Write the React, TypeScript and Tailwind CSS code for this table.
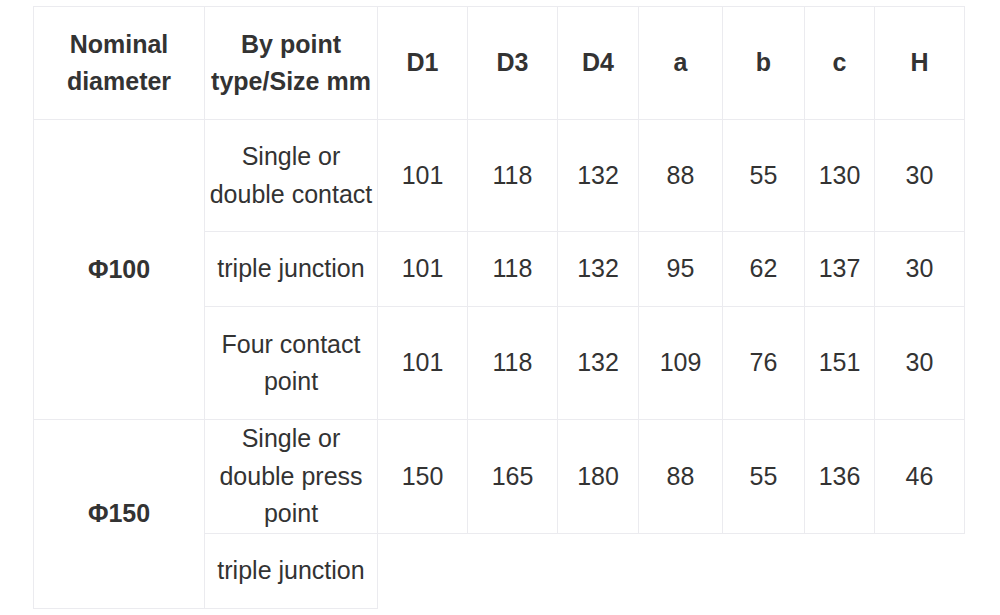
import clsx from 'clsx';

type Cell = { text: string; bold?: boolean; rowSpan?: number };

const widths = [171, 173, 90, 90, 81, 84, 82, 70, 90];

const header = ['Nominal diameter', 'By point type/Size mm', 'D1', 'D3', 'D4', 'a', 'b', 'c', 'H'];

const rows: { h: number; cells: Cell[] }[] = [
  {
    h: 112,
    cells: [
      { text: 'Φ100', bold: true, rowSpan: 3 },
      { text: 'Single or double contact' },
      { text: '101' }, { text: '118' }, { text: '132' }, { text: '88' }, { text: '55' }, { text: '130' }, { text: '30' },
    ],
  },
  {
    h: 75,
    cells: [
      { text: 'triple junction' },
      { text: '101' }, { text: '118' }, { text: '132' }, { text: '95' }, { text: '62' }, { text: '137' }, { text: '30' },
    ],
  },
  {
    h: 113,
    cells: [
      { text: 'Four contact point' },
      { text: '101' }, { text: '118' }, { text: '132' }, { text: '109' }, { text: '76' }, { text: '151' }, { text: '30' },
    ],
  },
  {
    h: 112,
    cells: [
      { text: 'Φ150', bold: true, rowSpan: 2 },
      { text: 'Single or double press point' },
      { text: '150' }, { text: '165' }, { text: '180' }, { text: '88' }, { text: '55' }, { text: '136' }, { text: '46' },
    ],
  },
  {
    h: 75,
    cells: [{ text: 'triple junction' }],
  },
];

export default function App() {
  return (
    <div className="min-h-[615px] bg-white pl-[33px] pt-[6px] font-['Liberation_Sans',Arial,sans-serif] text-[25px] leading-[37.5px] text-[#333333]">
      <table className="w-[931px] table-fixed border-collapse">
        <colgroup>
          {widths.map((w, i) => (
            <col key={i} style={{ width: w }} />
          ))}
        </colgroup>
        <thead>
          <tr className="h-[113px]">
            {header.map((h) => (
              <th key={h} className="border border-[#ebebef] px-1 py-0 text-center align-middle font-bold">
                {h}
              </th>
            ))}
          </tr>
        </thead>
        <tbody>
          {rows.map((r, i) => (
            <tr key={i} style={{ height: r.h }}>
              {r.cells.map((c, j) => (
                <td
                  key={j}
                  rowSpan={c.rowSpan}
                  className={clsx(
                    'border border-[#ebebef] px-1 py-0 text-center align-middle',
                    c.bold && 'font-bold'
                  )}
                >
                  {c.text}
                </td>
              ))}
            </tr>
          ))}
        </tbody>
      </table>
    </div>
  );
}
